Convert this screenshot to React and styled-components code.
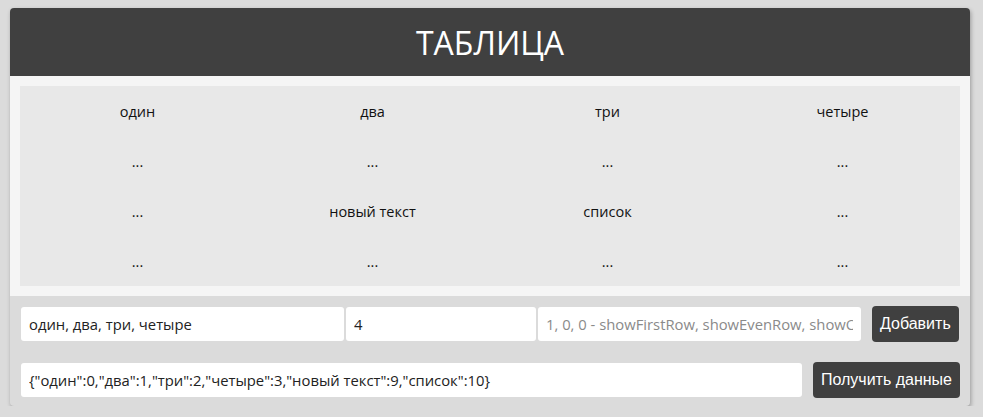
import React from 'react';
import styled, { createGlobalStyle } from 'styled-components';

const columns = 4;
const cells = [
  'один', 'два', 'три', 'четыре',
  '...', '...', '...', '...',
  '...', 'новый текст', 'список', '...',
  '...', '...', '...', '...',
];

export default function App() {
  return (
    <>
      <GlobalStyle />
      <Card>
        <Header>
          <Title>ТАБЛИЦА</Title>
        </Header>
        <TableArea>
          <Table>
            {cells.map((text, i) => (
              <Cell key={i}>{text}</Cell>
            ))}
          </Table>
        </TableArea>
        <Controls>
          <Row>
            <Field $width={323} defaultValue="один, два, три, четыре" />
            <Field $width={190} defaultValue="4" />
            <Field $width={323} autoFocus placeholder="1, 0, 0 - showFirstRow, showEvenRow, showOddRow" />
            <Button $spaced>Добавить</Button>
          </Row>
          <Row>
            <Field $width={781} defaultValue={'{"один":0,"два":1,"три":2,"четыре":3,"новый текст":9,"список":10}'} />
            <Button $spaced>Получить данные</Button>
          </Row>
        </Controls>
      </Card>
    </>
  );
}

const GlobalStyle = createGlobalStyle`
  body {
    margin: 0;
    background: #dbdbdb;
    font-family: "Open Sans", "Liberation Sans", sans-serif;
  }
`;

const Card = styled.div`
  width: 960px;
  margin: 8px 0 0 10px;
  border-radius: 4px;
  overflow: hidden;
  background: #dbdbdb;
  box-shadow: 1px 2px 4px rgba(0, 0, 0, 0.3);
`;

const Header = styled.div`
  height: 68px;
  background: #404040;
  display: flex;
  align-items: center;
  justify-content: center;
`;

const Title = styled.h1`
  margin: 0;
  color: #fff;
  font-size: 32px;
  font-weight: 400;
`;

const TableArea = styled.div`
  background: #f5f5f5;
  padding: 10px;
`;

const Table = styled.div`
  display: grid;
  grid-template-columns: repeat(${columns}, 1fr);
  grid-auto-rows: 50px;
  background: #e8e8e8;
`;

const Cell = styled.div`
  display: flex;
  align-items: center;
  justify-content: center;
  font-size: 14.5px;
  color: #111;
`;

const Controls = styled.div`
  padding: 10px 10px 8px 11px;
  display: flex;
  flex-direction: column;
  gap: 20px;
`;

const Row = styled.div`
  display: flex;
  align-items: center;
  gap: 2px;
`;

const Field = styled.input`
  box-sizing: border-box;
  width: ${p => p.$width}px;
  height: 34px;
  padding: 0 8px;
  border: none;
  border-radius: 3px;
  background: #fff;
  font-family: "Open Sans", sans-serif;
  font-size: 14.8px;
  color: #222;
  outline: none;

  &::placeholder {
    color: #8a8a8a;
  }
`;

const Button = styled.button`
  margin-left: ${p => (p.$spaced ? '9px' : '0')};
  height: 36px;
  padding: 0 8px;
  border: none;
  border-radius: 4px;
  background: #404040;
  color: #fff;
  font-family: "Liberation Sans", Arial, sans-serif;
  font-size: 16px;
  cursor: pointer;
`;
